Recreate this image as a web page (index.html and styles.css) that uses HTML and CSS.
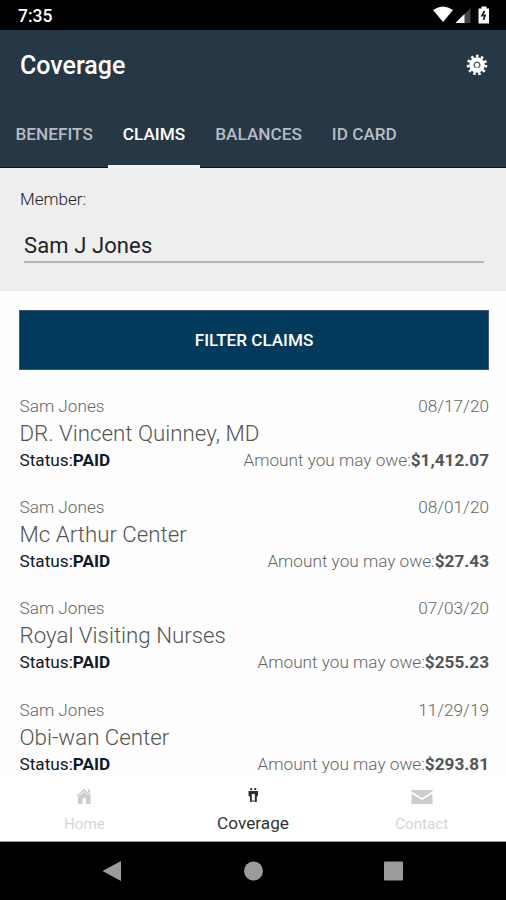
FILE: index.html
```html
<!DOCTYPE html>
<html lang="en">
<head>
    <meta charset="UTF-8">
    <meta name="viewport" content="width=device-width, initial-scale=1.0">
    <title>Coverage</title>
    <link rel="stylesheet" href="styles.css">
</head>
<body>
    <div class="status-bar">
        <span class="clock">7:35</span>
        <svg class="status-icons" width="58" height="20" viewBox="0 0 58 20">
            <path d="M1 5Q11 -2 21 5L11 17Z" fill="#fff"/>
            <path d="M38.500 3V18H23.500Z" fill="#444"/>
            <path d="M32.500 9V18H23.500Z" fill="#fff"/>
            <path d="M49.500 1.500h5v2H57v15H46.500V3.500h3z" fill="#fff"/>
            <path d="M52.500 6L50 10.500H53L51.500 15" fill="none" stroke="#222" stroke-width="1.800"/>
        </svg>
    </div>

    <header class="header">
        <div class="title-row">
            <h1>Coverage</h1>
            <svg class="gear" width="22" height="22" viewBox="-11 -11 22 22">
                <circle r="7.800" fill="#fff"/>
                <circle r="8.900" fill="none" stroke="#fff" stroke-width="2.800" stroke-dasharray="2.500 2.584"/>
                <circle r="2.900" fill="none" stroke="#44515c" stroke-width="1.200"/>
                <path d="M-1.500 3.300H1.500" stroke="#fff" stroke-width="1.400"/>
            </svg>
        </div>
        <nav class="tabs">
            <a class="tab">BENEFITS</a>
            <a class="tab active">CLAIMS</a>
            <a class="tab">BALANCES</a>
            <a class="tab">ID CARD</a>
        </nav>
    </header>

    <section class="member">
        <label class="member-label">Member:</label>
        <div class="member-select">Sam J Jones</div>
    </section>

    <main class="content">
        <button class="filter">FILTER CLAIMS</button>

        <div class="claim">
            <div class="row"><span>Sam Jones</span><span class="date">08/17/20</span></div>
            <div class="provider">DR. Vincent Quinney, MD</div>
            <div class="row"><span class="status">Status:<b>PAID</b></span><span class="owe">Amount you may owe:<b>$1,412.07</b></span></div>
        </div>
        <div class="claim">
            <div class="row"><span>Sam Jones</span><span class="date">08/01/20</span></div>
            <div class="provider">Mc Arthur Center</div>
            <div class="row"><span class="status">Status:<b>PAID</b></span><span class="owe">Amount you may owe:<b>$27.43</b></span></div>
        </div>
        <div class="claim">
            <div class="row"><span>Sam Jones</span><span class="date">07/03/20</span></div>
            <div class="provider">Royal Visiting Nurses</div>
            <div class="row"><span class="status">Status:<b>PAID</b></span><span class="owe">Amount you may owe:<b>$255.23</b></span></div>
        </div>
        <div class="claim">
            <div class="row"><span>Sam Jones</span><span class="date">11/29/19</span></div>
            <div class="provider">Obi-wan Center</div>
            <div class="row"><span class="status">Status:<b>PAID</b></span><span class="owe">Amount you may owe:<b>$293.81</b></span></div>
        </div>
    </main>

    <nav class="bottom-nav">
        <a class="nav-item">
            <svg width="22" height="18" viewBox="0 0 22 18">
                <path d="M3.500 8.500L11 2L18.500 8.500L17.500 9.500L11 4L4.500 9.500Z" fill="#ccc"/>
                <path d="M15 2.500h2v4l-2-1.500z" fill="#ccc"/>
                <path d="M5 9.800L11 5L17.500 9.800V17H13V11H9.500V17H5Z" fill="#ccc"/>
            </svg>
            <span>Home</span>
        </a>
        <a class="nav-item active">
            <svg width="22" height="18" viewBox="0 0 22 18">
                <circle cx="9.200" cy="2.100" r="1.200" fill="#26323c"/>
                <circle cx="13.200" cy="2.100" r="1.200" fill="#26323c"/>
                <path d="M6.500 4H16V8.500L14.800 10V15H12.800V7H9.800V15H8V10L6.500 8.500Z" fill="#26323c"/>
                <path d="M9.800 14H12.800" stroke="#26323c" stroke-width="1"/>
            </svg>
            <span>Coverage</span>
        </a>
        <a class="nav-item">
            <svg width="22" height="18" viewBox="0 0 22 18">
                <path d="M.5 3H21.500V4.500L11 11L.5 4.500Z" fill="#ccc"/>
                <path d="M.5 6.500L11 13L21.500 6.500V17H.5Z" fill="#ccc"/>
            </svg>
            <span>Contact</span>
        </a>
    </nav>

    <div class="system-nav">
        <svg width="22" height="22" viewBox="0 0 22 22"><path d="M.5 11L19 1V21Z" fill="#9b9b9b"/></svg>
        <svg width="22" height="22" viewBox="0 0 22 22"><circle cx="11.500" cy="11" r="9.500" fill="#9b9b9b"/></svg>
        <svg width="22" height="22" viewBox="0 0 22 22"><rect x="2" y="1.500" width="19" height="19" rx="1" fill="#9b9b9b"/></svg>
    </div>
</body>
</html>
```
FILE: styles.css
```css
* {
    box-sizing: border-box;
}
body {
    margin: 0;
    height: 900px;
    display: flex;
    flex-direction: column;
    overflow: hidden;
    background-color: #fefefe;
    font-family: Roboto, sans-serif;
    color: #666;
}
.status-bar {
    height: 30px;
    flex: none;
    display: flex;
    justify-content: space-between;
    align-items: center;
    padding: 1px 16px 0 18px;
    background-color: #000;
}
.clock {
    color: #fff;
    font-size: 17.5px;
    font-weight: 500;
}
.status-icons {
    margin-top: -1px;
}
.header {
    height: 138px;
    flex: none;
    background-color: #263746;
    border-bottom: 1px solid #0c1230;
}
.title-row {
    height: 71px;
    display: flex;
    justify-content: space-between;
    align-items: center;
    padding: 0 18px 0 20px;
}
h1 {
    margin: 0;
    color: #fff;
    font-size: 25px;
    font-weight: 500;
}
.gear {
    margin-top: -2px;
}
.tabs {
    display: flex;
    height: 67px;
    padding-left: 0.5px;
}
.tab {
    padding: 0 15px;
    color: #b7bcc1;
    font-size: 17.2px;
    font-weight: 500;
    line-height: 67px;
}
.tab.active {
    color: #fff;
    border-bottom: 3px solid #f2f2f2;
}
.member {
    height: 123px;
    flex: none;
    padding: 20px 20px 0;
    background-color: #eee;
}
.member-label {
    display: block;
    color: #222;
    font-size: 17px;
    font-weight: 300;
    line-height: 22px;
}
.member-select {
    margin: 19px 2px 0 4px;
    height: 34px;
    line-height: 33px;
    border-bottom: 2px solid #b5b5b5;
    color: #222;
    font-size: 22px;
    letter-spacing: 0.1px;
}
.content {
    flex: none;
    height: 489px;
    padding: 19px 17px 0 19px;
    overflow: hidden;
}
.filter {
    display: block;
    width: 100%;
    height: 60px;
    margin-bottom: 24px;
    padding: 0;
    border: 1px solid #45587a;
    background-color: #023a5b;
    color: #fff;
    font-family: inherit;
    font-size: 17.1px;
    font-weight: 500;
}
.claim {
    height: 101.2px;
    padding-left: 0.5px;
    font-size: 17.2px;
    font-weight: 300;
}
.row {
    display: flex;
    justify-content: space-between;
    line-height: 25px;
}
.provider {
    color: #555;
    font-size: 22.3px;
    line-height: 29px;
}
.status {
    color: #111a28;
    font-weight: 400;
}
.status b {
    color: #111a28;
    font-weight: 700;
}
.owe b {
    color: #555;
    font-weight: 700;
}
.bottom-nav {
    flex: none;
    height: 62px;
    display: flex;
    padding-top: 7px;
    border-bottom: 1px solid #999;
    background-color: #fff;
}
.nav-item {
    flex: 1;
    display: flex;
    flex-direction: column;
    align-items: center;
    color: #d6d6d6;
    font-size: 15.2px;
    line-height: 20px;
    gap: 9px;
}
.nav-item.active {
    color: #333;
    font-size: 17.2px;
    gap: 8px;
}
.system-nav {
    flex: 1;
    display: flex;
    justify-content: center;
    align-items: center;
    gap: 118px;
    background-color: #000;
}
```
